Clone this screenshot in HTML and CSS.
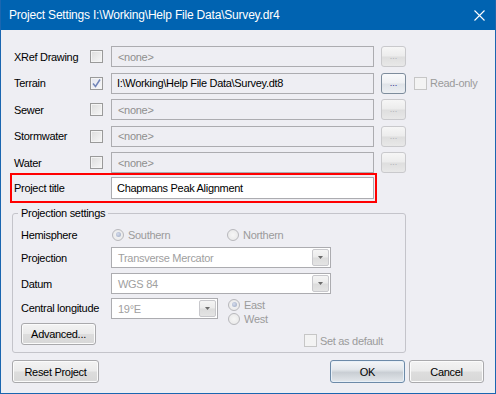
FILE: index.html
```html
<!DOCTYPE html>
<html>
<head>
<meta charset="utf-8">
<link rel="stylesheet" href="styles.css">
</head>
<body>
<div class="window">
  <div class="titlebar">
    <span class="title">Project Settings I:\Working\Help File Data\Survey.dr4</span>
    <svg class="close" width="11" height="11" viewBox="0 0 11 11"><path d="M0.5 0.5L10.5 10.5M10.5 0.5L0.5 10.5" stroke="#fff" stroke-width="1.1"/></svg>
  </div>
  <div class="content">
    <div class="files">
      <div class="row">
        <span class="label">XRef Drawing</span>
        <span class="cb"></span>
        <div class="field muted">&lt;none&gt;</div>
        <span class="dots off">...</span>
      </div>
      <div class="row">
        <span class="label">Terrain</span>
        <span class="cb checked"><svg width="11" height="11" viewBox="0 0 11 11"><path d="M2 5.5L4.5 8.5L9 1.5" fill="none" stroke="#7285b8" stroke-width="1.5"/></svg></span>
        <div class="field">I:\Working\Help File Data\Survey.dt8</div>
        <span class="dots on">...</span>
        <span class="readonly"><span class="cb dis"></span><span class="grey">Read-only</span></span>
      </div>
      <div class="row">
        <span class="label">Sewer</span>
        <span class="cb"></span>
        <div class="field muted">&lt;none&gt;</div>
        <span class="dots off">...</span>
      </div>
      <div class="row">
        <span class="label">Stormwater</span>
        <span class="cb"></span>
        <div class="field muted">&lt;none&gt;</div>
        <span class="dots off">...</span>
      </div>
      <div class="row">
        <span class="label">Water</span>
        <span class="cb"></span>
        <div class="field muted">&lt;none&gt;</div>
        <span class="dots off">...</span>
      </div>
    </div>

    <div class="titlebox">
      <span class="tlabel">Project title</span>
      <div class="field white">Chapmans Peak Alignment</div>
    </div>

    <fieldset class="group">
      <legend>Projection settings</legend>
      <div class="grow hemi">
        <span class="glabel">Hemisphere</span>
        <span class="opt south"><span class="radio sel"></span><span class="grey">Southern</span></span>
        <span class="opt"><span class="radio"></span><span class="grey">Northern</span></span>
      </div>
      <div class="grow proj">
        <span class="glabel">Projection</span>
        <div class="combo wide"><span class="grey">Transverse Mercator</span><span class="arrow"><svg width="5" height="3" viewBox="0 0 5 3"><path d="M0 0H5L2.5 3Z" fill="#6a6a6a"/></svg></span></div>
      </div>
      <div class="grow datum">
        <span class="glabel">Datum</span>
        <div class="combo wide"><span class="grey">WGS 84</span><span class="arrow"><svg width="5" height="3" viewBox="0 0 5 3"><path d="M0 0H5L2.5 3Z" fill="#6a6a6a"/></svg></span></div>
      </div>
      <div class="grow central">
        <span class="glabel clabel">Central longitude</span>
        <div class="combo narrow"><span class="grey">19°E</span><span class="arrow"><svg width="5" height="3" viewBox="0 0 5 3"><path d="M0 0H5L2.5 3Z" fill="#6a6a6a"/></svg></span></div>
        <div class="ew">
          <span class="opt"><span class="radio sel"></span><span class="grey">East</span></span>
          <span class="opt"><span class="radio"></span><span class="grey">West</span></span>
        </div>
      </div>
      <div class="grow last">
        <span class="btn adv">Advanced...</span>
        <span class="setdef"><span class="cb dis"></span><span class="grey">Set as default</span></span>
      </div>
    </fieldset>

    <div class="footer">
      <span class="btn reset">Reset Project</span>
      <span class="btn ok">OK</span>
      <span class="btn cancel">Cancel</span>
    </div>
  </div>
</div>
</body>
</html>
```

FILE: styles.css
```css
* { box-sizing: border-box; }
html, body { margin: 0; padding: 0; background: #eeeef3; }
body {
  font-family: "Liberation Sans", Arial, sans-serif;
  font-size: 11px;
  letter-spacing: -0.3px;
  color: #000;
}
.window {
  width: 496px;
  height: 394px;
  border: 1px solid #1a66b0;
  border-top: 0;
  background: #eeeef3;
  display: flex;
  flex-direction: column;
}
.titlebar {
  height: 30px;
  flex: none;
  background: #0063b1;
  color: #fff;
  display: flex;
  align-items: center;
  padding-left: 8px;
  font-size: 12px;
  letter-spacing: -0.2px;
}
.close { margin-left: auto; margin-right: 10px; }

.content { padding: 16px 11px 0 9px; display: flex; flex-direction: column; }

.files { display: flex; flex-direction: column; gap: 5.5px; padding-left: 4px; }
.row { display: flex; align-items: center; height: 21px; }
.label { width: 76px; flex: none; }

.cb {
  width: 13px; height: 13px; flex: none;
  border: 1px solid #9a9a9a;
  background: linear-gradient(135deg, #dcdcdc, #f7f7f7);
  display: inline-flex; align-items: center; justify-content: center;
  box-shadow: inset 0 0 0 1px #f4f4f4;
}
.files .cb { margin-right: 8px; }
.cb.checked { background: linear-gradient(135deg, #e4e6ee, #f7f7fa); }
.cb.dis { border-color: #c6c6c6; background: #f3f3f3; box-shadow: none; }

.field {
  width: 263px; height: 21px; flex: none;
  border: 1px solid #acacb0;
  background: #eeeef3;
  padding-left: 5px;
  display: flex; align-items: center;
  white-space: nowrap; overflow: hidden;
}
.field.muted { color: #8e8e8e; padding-left: 6px; }
.field.white { background: #fff; height: 22px; }

.dots {
  width: 25px; height: 21px; flex: none; margin-left: 7px;
  border: 1px solid #c9c9cc; border-radius: 3px;
  background: linear-gradient(#f6f6f6 0%, #ececec 48%, #dedede 52%, #e8e8e8 100%);
  display: flex; align-items: flex-end; justify-content: center;
  font-size: 9px; letter-spacing: 0; line-height: 1; padding-bottom: 5px;
  color: #b0b0b8;
}
.dots.on { border-color: #7d8c9c; color: #2a2a90; background: linear-gradient(#f8f9fb 0%, #eef0f3 48%, #dfe3e8 52%, #eceff3 100%); }

.readonly { display: flex; align-items: center; margin-left: 8px; }
.readonly .cb { margin-right: 3px; }
.grey { color: #9b9b9b; }

.titlebox {
  width: 367px; height: 30px;
  border: 2px solid #f00;
  display: flex; align-items: center;
  padding: 2px 1px;
}
.tlabel { width: 98px; flex: none; padding-left: 1px; }

.group {
  margin: 3px 0 0 2px;
  width: 394px;
  border: 1px solid #c4c4ca;
  border-radius: 3px;
  padding: 6px 8px 5px 8px;
  min-width: 0;
}
.group legend {
  margin-left: -3px;
  padding: 0 3px;
  line-height: 14px;
  font-size: 11px;
}
.grow { display: flex; align-items: center; }
.glabel { width: 90px; flex: none; }
.clabel { line-height: 21px; }
.hemi { height: 17px; }
.opt { display: flex; align-items: center; }
.south { width: 115px; margin-left: 1px; }
.radio {
  width: 12px; height: 12px; border-radius: 50%;
  border: 1px solid #b8b8bc;
  background: radial-gradient(circle, #f6f6f6, #e6e6e6);
  margin-right: 4px; flex: none;
  display: inline-flex; align-items: center; justify-content: center;
}
.radio.sel::after {
  content: ""; width: 5px; height: 5px; border-radius: 50%;
  background: radial-gradient(circle at 40% 40%, #d5dcec, #9aa6c0);
}
.proj { margin-top: 4px; }
.datum { margin-top: 5px; }
.central { margin-top: 4px; align-items: flex-start; }
.combo {
  height: 21px; flex: none;
  border: 1px solid #acacb0;
  background: #fff;
  display: flex; align-items: center;
  padding-left: 6px; padding-right: 1px;
}
.combo .grey { color: #a0a0a0; }
.combo.wide { width: 220px; }
.combo.narrow { width: 107px; }
.arrow {
  margin-left: auto;
  width: 17px; height: 17px;
  border: 1px solid #c8c8cc; border-radius: 2px;
  background: linear-gradient(#f4f4f4 0%, #ebebeb 48%, #dcdcdc 52%, #e4e4e4 100%);
  display: flex; align-items: center; justify-content: center;
}
.ew { margin-left: 10px; display: flex; flex-direction: column; }
.ew .opt { height: 13px; }
.ew .opt + .opt { margin-top: 1px; }
.last { margin-top: -2px; height: 24px; align-items: flex-start; }
.setdef { display: flex; align-items: center; align-self: flex-end; margin-left: auto; margin-right: 14px; }
.setdef .cb { margin-right: 3px; }

.btn {
  display: flex; align-items: center; justify-content: center;
  border: 1px solid #a9a9ac; border-radius: 3px;
  background: linear-gradient(#f3f3f3 0%, #ebebeb 48%, #dddddd 52%, #d8d8d8 100%);
  box-shadow: inset 0 0 0 1px #fbfbfb;
  flex: none;
}
.adv { width: 75px; height: 22px; }
.footer { display: flex; margin-top: 7px; padding-left: 2px; }
.reset { width: 87px; height: 23px; }
.ok { width: 75px; height: 23px; margin-left: auto; border-color: #6c8aa8;
  background: linear-gradient(#f4f6f8 0%, #e4e8ec 40%, #c9ced4 55%, #e3e7eb 100%);
  box-shadow: inset 0 0 0 1px #e8f0f8; }
.cancel { width: 75px; height: 23px; margin-left: 4px; }
```
